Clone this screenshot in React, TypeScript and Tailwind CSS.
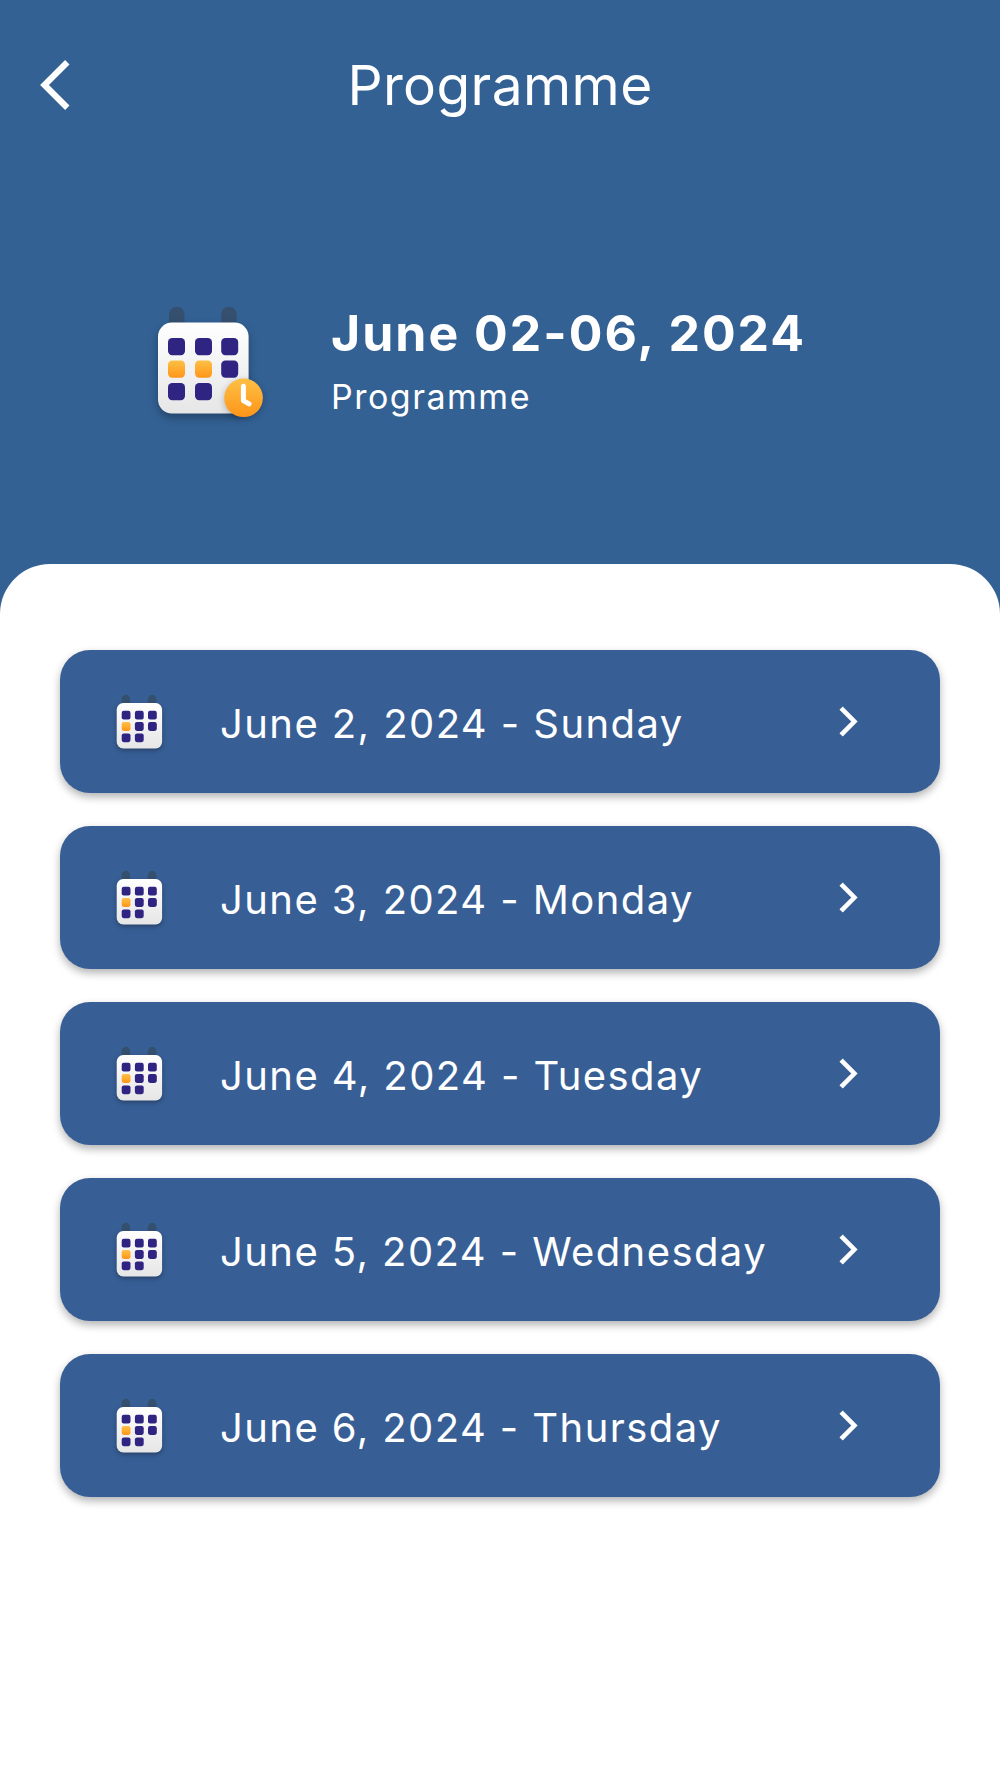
import { useId } from 'react';

const days = [
  'June 2, 2024 - Sunday',
  'June 3, 2024 - Monday',
  'June 4, 2024 - Tuesday',
  'June 5, 2024 - Wednesday',
  'June 6, 2024 - Thursday',
];

function Gradients({ id }: { id: string }) {
  return (
    <defs>
      <linearGradient id={`${id}-paper`} x1="0" y1="0" x2="0" y2="1">
        <stop offset="0" stopColor="#ffffff" />
        <stop offset="1" stopColor="#e6e6e6" />
      </linearGradient>
      <linearGradient id={`${id}-orange`} x1="0" y1="0" x2="0" y2="1">
        <stop offset="0" stopColor="#fcc046" />
        <stop offset="1" stopColor="#ff9518" />
      </linearGradient>
    </defs>
  );
}

function CalendarClockIcon() {
  const id = useId();
  const cells = [
    [10, 15.5], [37, 15.5], [63.2, 15.5],
    [10, 38], [37, 38], [63.2, 38],
    [10, 60.5], [37, 60.5],
  ];
  return (
    <svg className="w-[106px] h-[107px] overflow-visible" viewBox="0 -16.6 106 107">
      <Gradients id={id} />
      <path d="M11 2V-8a7.75 7.75 0 0115.5 0V2zM63.2 2V-8a7.75 7.75 0 0115.5 0V2z" fill="#35506f" />
      <rect width="90.6" height="91" rx="14" fill={`url(#${id}-paper)`} className="drop-shadow-[0_4px_4px_rgba(0,0,0,0.3)]" />
      {cells.map(([x, y], i) => (
        <rect key={i} x={x} y={y} width="17" height="17.2" rx="4.2" fill={i === 3 || i === 4 ? `url(#${id}-orange)` : '#2f2482'} />
      ))}
      <circle cx="85.6" cy="75.2" r="19.3" fill={`url(#${id}-orange)`} className="drop-shadow-[0_2px_3px_rgba(0,0,0,0.25)]" />
      <path d="M85.4 63.6V78L91 81.3" fill="none" stroke="#fff" strokeWidth="5" strokeLinecap="round" strokeLinejoin="round" />
    </svg>
  );
}

function CalendarIcon() {
  const id = useId();
  const cells = [
    [5, 7.8], [18.2, 7.8], [31.3, 7.8],
    [5, 19.1], [18.2, 19.1], [31.3, 19.1],
    [5, 30.4], [18.2, 30.4],
  ];
  return (
    <svg className="w-[45px] h-[54px] overflow-visible" viewBox="0.3 -8 45 54">
      <Gradients id={id} />
      <path d="M5 2V-4a4.2 4.2 0 018.4 0V2zM31.2 2V-4a4.2 4.2 0 018.4 0V2z" fill="#35506f" />
      <rect width="45.4" height="45.4" rx="6.5" fill={`url(#${id}-paper)`} className="drop-shadow-[0_2px_2px_rgba(0,0,0,0.3)]" />
      {cells.map(([x, y], i) => (
        <rect key={i} x={x} y={y} width="8.8" height="8.8" rx="2.1" fill={i === 3 ? `url(#${id}-orange)` : '#2f2482'} />
      ))}
    </svg>
  );
}

function DayRow({ label }: { label: string }) {
  return (
    <button className="flex h-[143px] w-full items-center rounded-[30px] bg-[#375e95] pl-[57px] pr-[82px] text-left text-white shadow-[0_4px_8px_rgba(0,0,0,0.3)]">
      <CalendarIcon />
      <span className="ml-[58px] flex-1 whitespace-nowrap pt-1 text-[40px] leading-[48px] font-normal tracking-[1.42px]">{label}</span>
      <svg className="w-[19px] h-[31px]" viewBox="0 0 19 31" fill="none" stroke="currentColor" strokeWidth="4.6">
        <path d="M2.1 2.1L15.4 15.5L2.1 28.9" />
      </svg>
    </button>
  );
}

export default function App() {
  return (
    <div className="flex h-[1778px] w-[1000px] flex-col bg-[#336194] font-['Inter',sans-serif] text-white">
      {/* Top bar */}
      <header className="grid h-[170px] grid-cols-[100px_1fr_100px] items-center">
        <button className="pl-10">
          <svg className="w-[30px] h-[50px]" viewBox="0 0 30 50" fill="none" stroke="currentColor" strokeWidth="6.2">
            <path d="M27.3 2.2L4.5 25L27.3 47.8" />
          </svg>
        </button>
        <h1 className="text-center text-[55px] leading-[66px] font-normal tracking-[0.4px]">Programme</h1>
      </header>

      {/* Event summary */}
      <section className="flex h-[393.5px] items-start pl-[158px] pt-[136px]">
        <CalendarClockIcon />
        <div className="ml-[67px] -mt-[3px]">
          <h2 className="whitespace-nowrap text-[50px] leading-[60px] font-bold tracking-[2px]">June 02-06, 2024</h2>
          <p className="mt-[13px] text-[34px] leading-[42px] font-normal tracking-[1.5px]">Programme</p>
        </div>
      </section>

      {/* Days */}
      <main className="flex flex-1 flex-col gap-[33px] rounded-t-[50px] bg-white px-[60px] pt-[86.5px]">
        {days.map((day) => (
          <DayRow key={day} label={day} />
        ))}
      </main>
    </div>
  );
}
